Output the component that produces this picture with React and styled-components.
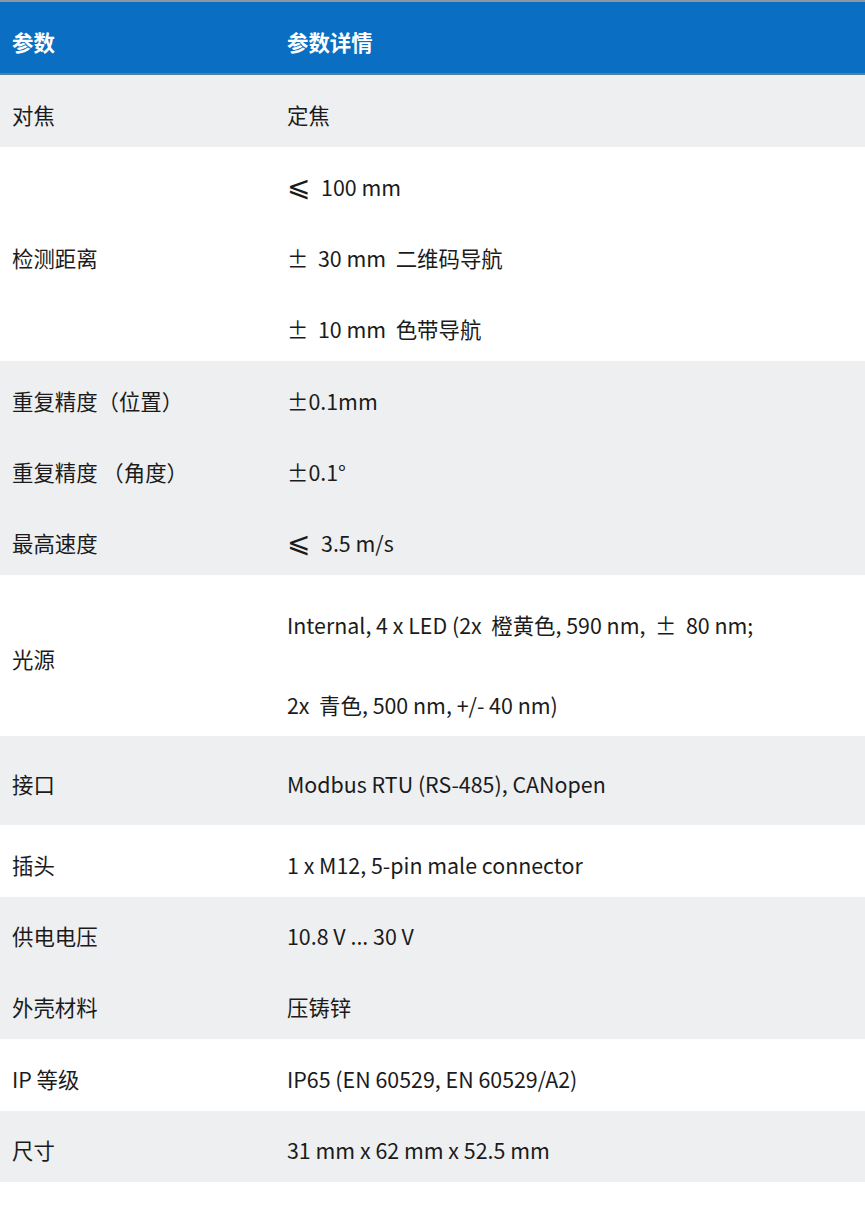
import React from "react"
import styled, { createGlobalStyle } from "styled-components"

const Global = createGlobalStyle`
  body {
    margin: 0;
    background: #fff;
    font-family: "Noto Sans CJK SC", "Noto Sans", sans-serif;
    color: #1b1b1b;
  }
`

const Table = styled.div`
  width: 865px;
  display: flex;
  flex-direction: column;
`

const Header = styled.div`
  height: 75px;
  box-sizing: border-box;
  display: grid;
  grid-template-columns: 275px 1fr;
  background: #0a6fc2;
  border-top: 2px solid #8b98a4;
  border-bottom: 2px solid #4f7ea6;
  color: #fff;
  font-weight: 700;
`

const Group = styled.div`
  display: grid;
  grid-template-columns: 275px 1fr;
  background: ${(p) => (p.$grey ? "#eeeff1" : "#fff")};
`

const Cell = styled.div`
  height: ${(p) => p.$h}px;
  box-sizing: border-box;
  display: flex;
  align-items: center;
  padding: 8px 12px 0;
  font-size: 21.4px;
  line-height: 30px;
  white-space: pre;
`

const HeadCell = styled(Cell)`
  height: 71px;
`

const Stack = styled.div`
  display: flex;
  flex-direction: column;
`

const MultiLine = styled.div`
  display: flex;
  flex-direction: column;
  gap: 50px;
  padding: 35px 12px 16px;
  font-size: 21.4px;
  line-height: 30px;
  white-space: pre;
`

const Sym = styled.span`
  font-family: "DejaVu Sans", sans-serif;
  font-size: 28px;
  line-height: 30px;
  margin-right: 1px;
`

const le = (rest) => (
  <>
    <Sym>⩽</Sym>
    {rest}
  </>
)

const groups = [
  { grey: true, rows: [["对焦", "定焦", 72]] },
  {
    grey: false,
    label: "检测距离",
    values: [le("  100 mm"), "±  30 mm  二维码导航", "±  10 mm  色带导航"],
    h: 214,
  },
  {
    grey: true,
    rows: [
      ["重复精度（位置）", "±0.1mm", 71.33],
      ["重复精度 （角度）", "±0.1°", 71.33],
      ["最高速度", le("  3.5 m/s"), 71.34],
    ],
  },
  {
    grey: false,
    label: "光源",
    multi: ["Internal, 4 x LED (2x  橙黄色, 590 nm,  ±  80 nm;", "2x  青色, 500 nm, +/- 40 nm)"],
    h: 161,
  },
  { grey: true, rows: [["接口", "Modbus RTU (RS-485), CANopen", 89]] },
  { grey: false, rows: [["插头", "1 x M12, 5-pin male connector", 72]] },
  {
    grey: true,
    rows: [
      ["供电电压", "10.8 V ... 30 V", 71],
      ["外壳材料", "压铸锌", 71],
    ],
  },
  { grey: false, rows: [["IP 等级", "IP65 (EN 60529, EN 60529/A2)", 72]] },
  { grey: true, rows: [["尺寸", "31 mm x 62 mm x 52.5 mm", 71]] },
]

const App = () => (
  <>
    <Global />
    <Table>
      <Header>
        <HeadCell>参数</HeadCell>
        <HeadCell>参数详情</HeadCell>
      </Header>
      {groups.map((g, i) => {
        if (g.rows) {
          return (
            <Group key={i} $grey={g.grey}>
              {g.rows.map(([k, v, h]) => (
                <React.Fragment key={k}>
                  <Cell $h={h}>{k}</Cell>
                  <Cell $h={h}>{v}</Cell>
                </React.Fragment>
              ))}
            </Group>
          )
        }
        return (
          <Group key={i} $grey={g.grey}>
            <Cell $h={g.h}>{g.label}</Cell>
            {g.values ? (
              <Stack>
                {g.values.map((v, j) => (
                  <Cell key={j} $h={g.h / g.values.length}>
                    {v}
                  </Cell>
                ))}
              </Stack>
            ) : (
              <MultiLine>
                {g.multi.map((v) => (
                  <div key={v}>{v}</div>
                ))}
              </MultiLine>
            )}
          </Group>
        )
      })}
    </Table>
  </>
)

export default App
